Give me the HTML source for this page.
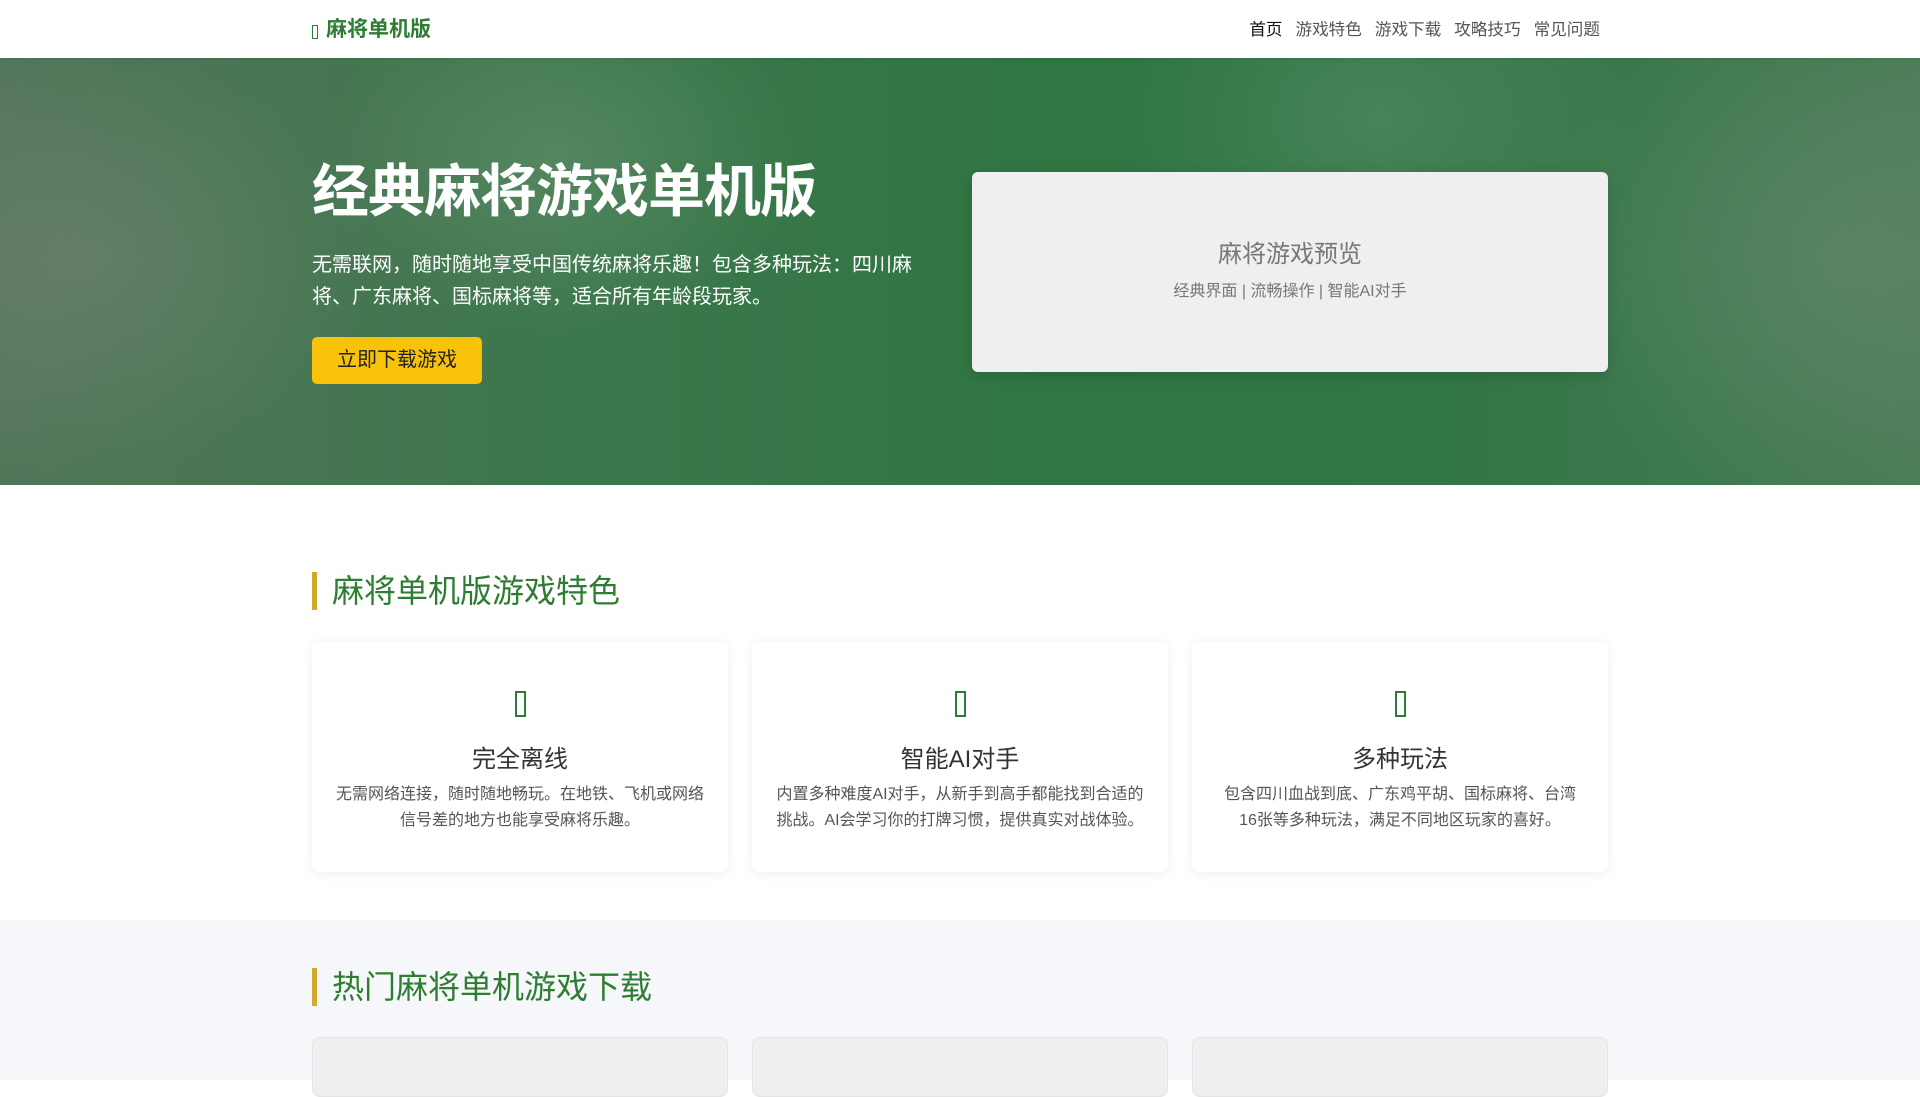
<!DOCTYPE html>
<html><head><meta charset="utf-8"><style>
*{margin:0;padding:0;box-sizing:border-box}
body{width:1920px;height:1080px;overflow:hidden;font-family:"Liberation Sans","Noto Sans CJK SC",sans-serif;background:#fff;color:#333}
.nav{height:58px;background:#fff;position:relative;box-shadow:0 1px 4px rgba(0,0,0,.08);z-index:2}
.logo{position:absolute;left:312px;top:13px;font-size:21px;font-weight:bold;color:#2e7d32}
.logo i{font-style:normal;margin-right:8px;display:inline-block;width:6px;height:14px;border:1px solid #2e7d32;vertical-align:-3px}
.menu{position:absolute;right:320px;top:16px;font-size:16.6px;color:#555}
.menu span{margin-left:13px}
.menu span:first-child{color:#111}
.hero{position:absolute;top:58px;left:0;width:1920px;height:427px;overflow:hidden;
background:radial-gradient(ellipse 260px 200px at 1380px 60px,rgba(150,180,155,.22),transparent),
radial-gradient(ellipse 240px 180px at 560px 100px,rgba(170,190,170,.22),transparent),
radial-gradient(ellipse 300px 220px at 80px 200px,rgba(130,140,130,.4),transparent),
radial-gradient(ellipse 320px 260px at 1850px 200px,rgba(130,150,135,.35),transparent),
linear-gradient(90deg,#52755a 0%,#3c774b 30%,#2f7643 55%,#317645 75%,#497c55 100%)}
.h1{position:absolute;left:312px;top:88px;font-size:57px;font-weight:bold;color:#fff;letter-spacing:-1px}
.desc{position:absolute;left:312px;top:191px;width:610px;font-size:20px;line-height:32px;color:#fff}
.btn{position:absolute;left:312px;top:279px;width:170px;height:47px;background:#f9c20a;border-radius:5px;color:#222;font-size:20px;text-align:center;line-height:47px}
.prev{position:absolute;left:972px;top:114px;width:636px;height:200px;background:#efefef;border-radius:6px;text-align:center;color:#777;box-shadow:0 4px 14px rgba(0,0,0,.15)}
.prev b{display:block;font-weight:normal;font-size:24px;margin-top:62px}
.prev small{display:block;font-size:16px;margin-top:8px}
.sec{position:absolute;left:0;width:1920px}
.h2{position:absolute;left:312px;border-left:5px solid #d4a72c;padding-left:15px;font-size:32px;color:#2e7d32;line-height:38px}
.card{position:absolute;width:416px;height:230px;background:#fff;border-radius:8px;box-shadow:0 2px 12px rgba(0,0,0,.07);text-align:center}
.card .ic{margin:49px auto 0;width:11px;height:26px;border:2px solid #2e7d32}
.card h3{font-weight:normal;font-size:24px;color:#333;margin-top:22px}
.card p{font-size:16px;line-height:26px;color:#555;margin:8px 24px 0}
.c2{position:absolute;width:416px;height:60px;top:1037px;background:#efefef;border:1px solid #e3e3e3;border-radius:8px}
</style></head><body>
<div class="nav"><div class="logo"><i></i>麻将单机版</div>
<div class="menu"><span>首页</span><span>游戏特色</span><span>游戏下载</span><span>攻略技巧</span><span>常见问题</span></div></div>
<div class="hero">
<div class="h1">经典麻将游戏单机版</div>
<div class="desc">无需联网，随时随地享受中国传统麻将乐趣！包含多种玩法：四川麻将、广东麻将、国标麻将等，适合所有年龄段玩家。</div>
<div class="btn">立即下载游戏</div>
<div class="prev"><b>麻将游戏预览</b><small>经典界面 | 流畅操作 | 智能AI对手</small></div>
</div>
<div class="sec" style="top:920px;height:160px;background:#f5f7fa"></div>
<div class="h2" style="top:572px">麻将单机版游戏特色</div>
<div class="card" style="left:312px;top:642px"><div class="ic"></div><h3>完全离线</h3><p>无需网络连接，随时随地畅玩。在地铁、飞机或网络信号差的地方也能享受麻将乐趣。</p></div>
<div class="card" style="left:752px;top:642px"><div class="ic"></div><h3>智能AI对手</h3><p>内置多种难度AI对手，从新手到高手都能找到合适的挑战。AI会学习你的打牌习惯，提供真实对战体验。</p></div>
<div class="card" style="left:1192px;top:642px"><div class="ic"></div><h3>多种玩法</h3><p>包含四川血战到底、广东鸡平胡、国标麻将、台湾16张等多种玩法，满足不同地区玩家的喜好。</p></div>
<div class="h2" style="top:968px">热门麻将单机游戏下载</div>
<div class="c2" style="left:312px"></div><div class="c2" style="left:752px"></div><div class="c2" style="left:1192px"></div>
</body></html>
